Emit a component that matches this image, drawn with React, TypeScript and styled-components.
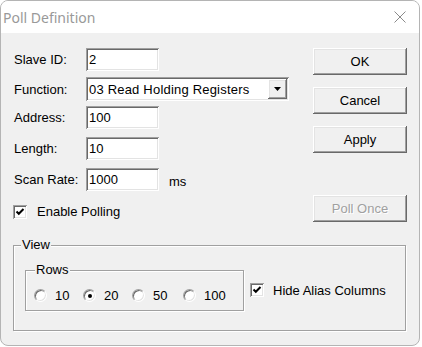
import React from "react";
import styled, { createGlobalStyle, css } from "styled-components";

const Global = createGlobalStyle`
  html, body { margin: 0; padding: 0; background: #ffffff; }
  * { box-sizing: border-box; }
`;

const Window = styled.div`
  width: 420px;
  height: 346px;
  border: 1px solid #b4b4b4;
  border-radius: 8px;
  overflow: hidden;
  display: flex;
  flex-direction: column;
  background: #f0f0f0;
  font-family: "Liberation Sans", Arial, sans-serif;
  font-size: 13px;
  color: #000;
`;

const TitleBar = styled.div`
  height: 32px;
  flex: none;
  background: #ffffff;
  display: flex;
  align-items: center;
  justify-content: space-between;
  padding: 0 13px 0 2px;
`;

const Title = styled.span`
  font-family: "Noto Sans", "Open Sans", sans-serif;
  font-size: 14px;
  color: #999999;
  padding-top: 1px;
`;

const Client = styled.div`
  flex: 1;
  padding: 15px 12px 0 12px;
  display: flex;
  flex-direction: column;
`;

const Top = styled.div`
  display: grid;
  grid-template-columns: 1fr 94px;
`;

const Form = styled.div`
  display: flex;
  flex-direction: column;
`;

const FieldRow = styled.div<{ $mt?: number }>`
  display: flex;
  align-items: center;
  margin-top: ${(p) => p.$mt ?? 0}px;
`;

const Label = styled.span`
  width: 73px;
  padding-left: 1px;
  white-space: nowrap;
`;

const sunken = css`
  background: #ffffff;
  box-shadow: inset 1px 1px 0 #a0a0a0, inset -1px -1px 0 #ffffff,
    inset 2px 2px 0 #696969, inset -2px -2px 0 #e3e3e3;
`;

const raised = css`
  background: #f0f0f0;
  box-shadow: inset -1px -1px 0 #696969, inset 1px 1px 0 #ffffff,
    inset -2px -2px 0 #a0a0a0, inset 2px 2px 0 #e3e3e3;
`;

const TextBox = styled.div<{ $w?: number }>`
  ${sunken};
  width: ${(p) => p.$w ?? 73}px;
  height: 23px;
  padding: 3px 3px 0 3px;
  line-height: 17px;
`;

const Unit = styled.span`
  margin-left: 10px;
  padding-top: 3px;
`;

const Combo = styled.div`
  ${sunken};
  width: 203px;
  height: 24px;
  padding: 2px;
  display: flex;
  align-items: center;
`;

const ComboText = styled.span`
  flex: 1;
  padding-left: 1px;
  line-height: 17px;
  letter-spacing: 0.2px;
`;

const DropButton = styled.div`
  ${raised};
  width: 19px;
  height: 20px;
  display: flex;
  align-items: center;
  justify-content: center;
`;

const CheckRow = styled.label<{ $mt?: number }>`
  display: flex;
  align-items: center;
  gap: 10px;
  margin-top: ${(p) => p.$mt ?? 0}px;
  white-space: nowrap;
`;

const CheckBoxBox = styled.span`
  ${sunken};
  width: 14px;
  height: 14px;
  flex: none;
  display: inline-flex;
`;

const Buttons = styled.div`
  display: flex;
  flex-direction: column;
`;

const Button = styled.button<{ $mt?: number; $disabled?: boolean }>`
  ${raised};
  border: none;
  margin: ${(p) => p.$mt ?? 0}px 0 0 0;
  height: 27px;
  width: 94px;
  padding: 0;
  font-family: "Liberation Sans", Arial, sans-serif;
  font-size: 13px;
  color: ${(p) => (p.$disabled ? "#a0a0a0" : "#000")};
  text-shadow: ${(p) => (p.$disabled ? "1px 1px 0 #ffffff" : "none")};
`;

const Group = styled.fieldset<{ $pt: number; $pb: number; $pl: number; $pr?: number }>`
  margin: 0;
  border: 1px solid #a0a0a0;
  box-shadow: inset 1px 1px 0 #ffffff, 1px 1px 0 #ffffff;
  padding: ${(p) => `${p.$pt}px ${p.$pr ?? 0}px ${p.$pb}px ${p.$pl}px`};
  min-width: 0;
`;

const Legend = styled.legend<{ $ml: number }>`
  padding: 0 1px;
  margin-left: ${(p) => p.$ml}px;
  line-height: 14px;
  background: #f0f0f0;
  position: relative;
`;

const ViewGroup = styled(Group)`
  margin-top: 16px;
  width: 393px;
  display: flex;
  align-items: center;
`;

const ViewInner = styled.div`
  display: flex;
  align-items: center;
  gap: 6px;
`;

const RowsGroup = styled(Group)`
  width: 219px;
`;

const RadioRow = styled.div`
  display: grid;
  grid-template-columns: 49px 49px 51px auto;
  height: 14px;
  align-items: center;
`;

const RadioItem = styled.label`
  display: flex;
  align-items: center;
  gap: 8px;
`;

const RadioCircle = styled.span<{ $on?: boolean }>`
  width: 13px;
  height: 13px;
  flex: none;
  border-radius: 50%;
  background: #ffffff;
  border: 1px solid;
  border-color: #a0a0a0 #ffffff #ffffff #a0a0a0;
  box-shadow: inset 1px 1px 0 #696969, inset -1px -1px 0 #e3e3e3;
  display: inline-flex;
  align-items: center;
  justify-content: center;
  &::after {
    content: "";
    width: 4px;
    height: 4px;
    border-radius: 50%;
    background: ${(p) => (p.$on ? "#000" : "transparent")};
  }
`;

const HideCheck = styled(CheckRow)`
  gap: 9px;
  margin-top: 6px;
`;

function CheckBox() {
  return (
    <CheckBoxBox>
      <svg width="14" height="14" viewBox="0 0 14 14">
        <path d="M3.5 6.5 L5.8 8.8 L10.5 4" fill="none" stroke="#000" strokeWidth="2" />
      </svg>
    </CheckBoxBox>
  );
}

function Radio({ label, on }: { label: string; on?: boolean }) {
  return (
    <RadioItem>
      <RadioCircle $on={on} />
      <span>{label}</span>
    </RadioItem>
  );
}

export default function App() {
  return (
    <>
      <Global />
      <Window>
        <TitleBar>
          <Title>Poll Definition</Title>
          <svg width="12" height="12" viewBox="0 0 12 12">
            <path d="M0.5 0.5 L11.5 11.5 M11.5 0.5 L0.5 11.5" stroke="#8a8a8a" strokeWidth="1" />
          </svg>
        </TitleBar>
        <Client>
          <Top>
            <Form>
              <FieldRow>
                <Label>Slave ID:</Label>
                <TextBox>2</TextBox>
              </FieldRow>
              <FieldRow $mt={6}>
                <Label>Function:</Label>
                <Combo>
                  <ComboText>03 Read Holding Registers</ComboText>
                  <DropButton>
                    <svg width="7" height="4" viewBox="0 0 7 4">
                      <path d="M0 0 H7 L3.5 4 Z" fill="#000" />
                    </svg>
                  </DropButton>
                </Combo>
              </FieldRow>
              <FieldRow $mt={5}>
                <Label>Address:</Label>
                <TextBox>100</TextBox>
              </FieldRow>
              <FieldRow $mt={8}>
                <Label>Length:</Label>
                <TextBox>10</TextBox>
              </FieldRow>
              <FieldRow $mt={8}>
                <Label>Scan Rate:</Label>
                <TextBox>1000</TextBox>
                <Unit>ms</Unit>
              </FieldRow>
              <CheckRow $mt={13}>
                <CheckBox />
                <span>Enable Polling</span>
              </CheckRow>
            </Form>
            <Buttons>
              <Button>OK</Button>
              <Button $mt={12}>Cancel</Button>
              <Button $mt={12}>Apply</Button>
              <Button $mt={42} $disabled>
                Poll Once
              </Button>
            </Buttons>
          </Top>
          <ViewGroup $pt={11} $pb={19} $pl={11}>
            <Legend $ml={-4}>View</Legend>
            <ViewInner>
              <RowsGroup $pt={11} $pb={8} $pl={8}>
                <Legend $ml={1}>Rows</Legend>
                <RadioRow>
                  <Radio label="10" />
                  <Radio label="20" on />
                  <Radio label="50" />
                  <Radio label="100" />
                </RadioRow>
              </RowsGroup>
              <HideCheck>
                <CheckBox />
                <span>Hide Alias Columns</span>
              </HideCheck>
            </ViewInner>
          </ViewGroup>
        </Client>
      </Window>
    </>
  );
}
